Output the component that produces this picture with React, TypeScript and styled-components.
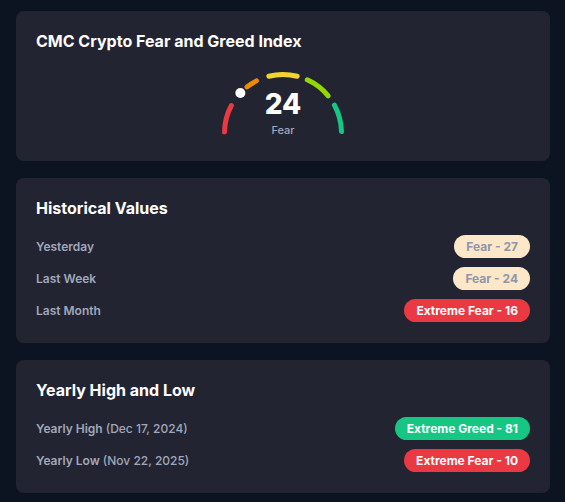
import React from "react";
import styled, { createGlobalStyle } from "styled-components";

const GlobalStyle = createGlobalStyle`
  html, body {
    margin: 0;
    padding: 0;
    background: #0d1421;
  }
  body {
    font-family: Inter, "Noto Sans", "Liberation Sans", sans-serif;
    -webkit-font-smoothing: antialiased;
  }
`;

const Page = styled.div`
  display: flex;
  flex-direction: column;
  gap: 17px;
  padding: 11px 15px 11px 16px;
  background: #0d1421;
  min-height: 502px;
  box-sizing: border-box;
`;

const Card = styled.section`
  background: #222531;
  border-radius: 8px;
  padding: 20px 20px 21px;
  display: flex;
  flex-direction: column;
`;

const Title = styled.h2`
  margin: 0;
  font-size: 16px;
  line-height: 20px;
  font-weight: 700;
  color: #ffffff;
`;

const GaugeWrap = styled.div`
  position: relative;
  align-self: center;
  width: 130px;
  height: 69px;
  margin-top: 20px;
`;

const GaugeValue = styled.div`
  position: absolute;
  left: 0;
  right: 0;
  top: 19px;
  text-align: center;
  font-size: 28px;
  line-height: 28px;
  font-weight: 800;
  color: #ffffff;
`;

const GaugeLabel = styled.div`
  position: absolute;
  left: 0;
  right: 0;
  top: 52px;
  text-align: center;
  font-size: 11px;
  line-height: 14px;
  font-weight: 500;
  color: #a1a7bb;
`;

const Rows = styled.div`
  display: flex;
  flex-direction: column;
  gap: 8px;
  margin-top: 16px;
`;

const Row = styled.div`
  display: flex;
  align-items: center;
  justify-content: space-between;
  height: 24px;
`;

const Label = styled.span`
  font-size: 12px;
  font-weight: 600;
  color: #a1a7bb;
`;

const DateNote = styled.span`
  font-weight: 500;
`;

type Tone = "fear" | "extremeFear" | "extremeGreed";

const toneColors: Record<Tone, { bg: string; fg: string }> = {
  fear: { bg: "#fde7c9", fg: "#8d96ab" },
  extremeFear: { bg: "#ea3943", fg: "#ffffff" },
  extremeGreed: { bg: "#16c784", fg: "#ffffff" },
};

const Badge = styled.span<{ $tone: Tone }>`
  display: inline-flex;
  align-items: center;
  height: 23px;
  padding: 0 12px;
  border-radius: 12px;
  font-size: 12px;
  font-weight: 700;
  background: ${(p) => toneColors[p.$tone].bg};
  color: ${(p) => toneColors[p.$tone].fg};
`;

const CX = 65;
const CY = 62;
const R = 58.5;

function pt(deg: number) {
  const a = (deg * Math.PI) / 180;
  return [CX - R * Math.cos(a), CY - R * Math.sin(a)];
}

function arc(a1: number, a2: number) {
  const [x1, y1] = pt(a1);
  const [x2, y2] = pt(a2);
  return `M ${x1.toFixed(2)} ${y1.toFixed(2)} A ${R} ${R} 0 0 1 ${x2.toFixed(2)} ${y2.toFixed(2)}`;
}

const segments = [
  { from: 1, to: 28, color: "#ea3943" },
  { from: 52, to: 63, color: "#ea8c00" },
  { from: 76, to: 104, color: "#f3d42f" },
  { from: 114.5, to: 140.5, color: "#93d900" },
  { from: 151.5, to: 178.5, color: "#16c784" },
];

function Gauge({ value, label }: { value: number; label: string }) {
  const [dx, dy] = pt((value / 100) * 180);
  return (
    <GaugeWrap>
      <svg width="130" height="69" viewBox="0 0 130 69">
        {segments.map((s, i) => (
          <path
            key={i}
            d={arc(s.from, s.to)}
            fill="none"
            stroke={s.color}
            strokeWidth={5}
            strokeLinecap="round"
          />
        ))}
        <circle cx={dx} cy={dy} r={5} fill="#ffffff" />
      </svg>
      <GaugeValue>{value}</GaugeValue>
      <GaugeLabel>{label}</GaugeLabel>
    </GaugeWrap>
  );
}

export default function App() {
  return (
    <>
      <GlobalStyle />
      <Page>
        <Card>
          <Title>CMC Crypto Fear and Greed Index</Title>
          <Gauge value={24} label="Fear" />
        </Card>
        <Card>
          <Title>Historical Values</Title>
          <Rows>
            <Row>
              <Label>Yesterday</Label>
              <Badge $tone="fear">Fear - 27</Badge>
            </Row>
            <Row>
              <Label>Last Week</Label>
              <Badge $tone="fear">Fear - 24</Badge>
            </Row>
            <Row>
              <Label>Last Month</Label>
              <Badge $tone="extremeFear">Extreme Fear - 16</Badge>
            </Row>
          </Rows>
        </Card>
        <Card>
          <Title>Yearly High and Low</Title>
          <Rows>
            <Row>
              <Label>
                Yearly High <DateNote>(Dec 17, 2024)</DateNote>
              </Label>
              <Badge $tone="extremeGreed">Extreme Greed - 81</Badge>
            </Row>
            <Row>
              <Label>
                Yearly Low <DateNote>(Nov 22, 2025)</DateNote>
              </Label>
              <Badge $tone="extremeFear">Extreme Fear - 10</Badge>
            </Row>
          </Rows>
        </Card>
      </Page>
    </>
  );
}
